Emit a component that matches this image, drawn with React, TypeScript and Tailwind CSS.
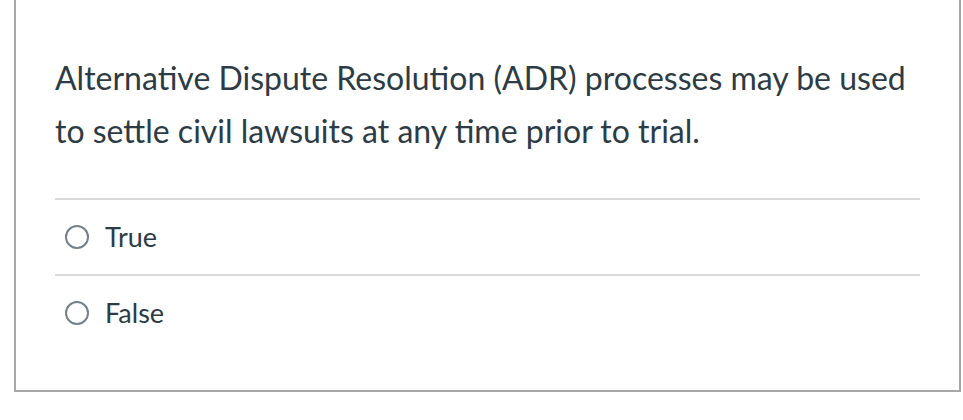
import React from 'react';

function Radio() {
  return (
    <span className="w-[24px] h-[24px] rounded-full border-2 border-[#73818b] bg-white shrink-0" />
  );
}

export default function App() {
  const answers = ['True', 'False'];
  return (
    <div className="w-[963px] h-[420px] bg-white overflow-hidden" style={{ fontFamily: 'Lato, "Noto Sans", sans-serif' }}>
      <div className="ml-[14px] w-[947px] h-[394px] -mt-[2px] border-2 border-[#a7a7a7] pt-[51px] px-[39px]">
        <p className="text-[32px] leading-[53px] text-[#2d3b45]">
          Alternative Dispute Resolution (ADR) processes may be used to settle civil lawsuits at any time prior to trial.
        </p>
        <div className="mt-[41px]">
          {answers.map((a) => (
            <div key={a} className="border-t-2 border-[#dadada] h-[76px] flex items-center pl-[10px] gap-[16px]">
              <Radio />
              <span className="text-[27px] text-[#2d3b45]">{a}</span>
            </div>
          ))}
        </div>
      </div>
    </div>
  );
}
